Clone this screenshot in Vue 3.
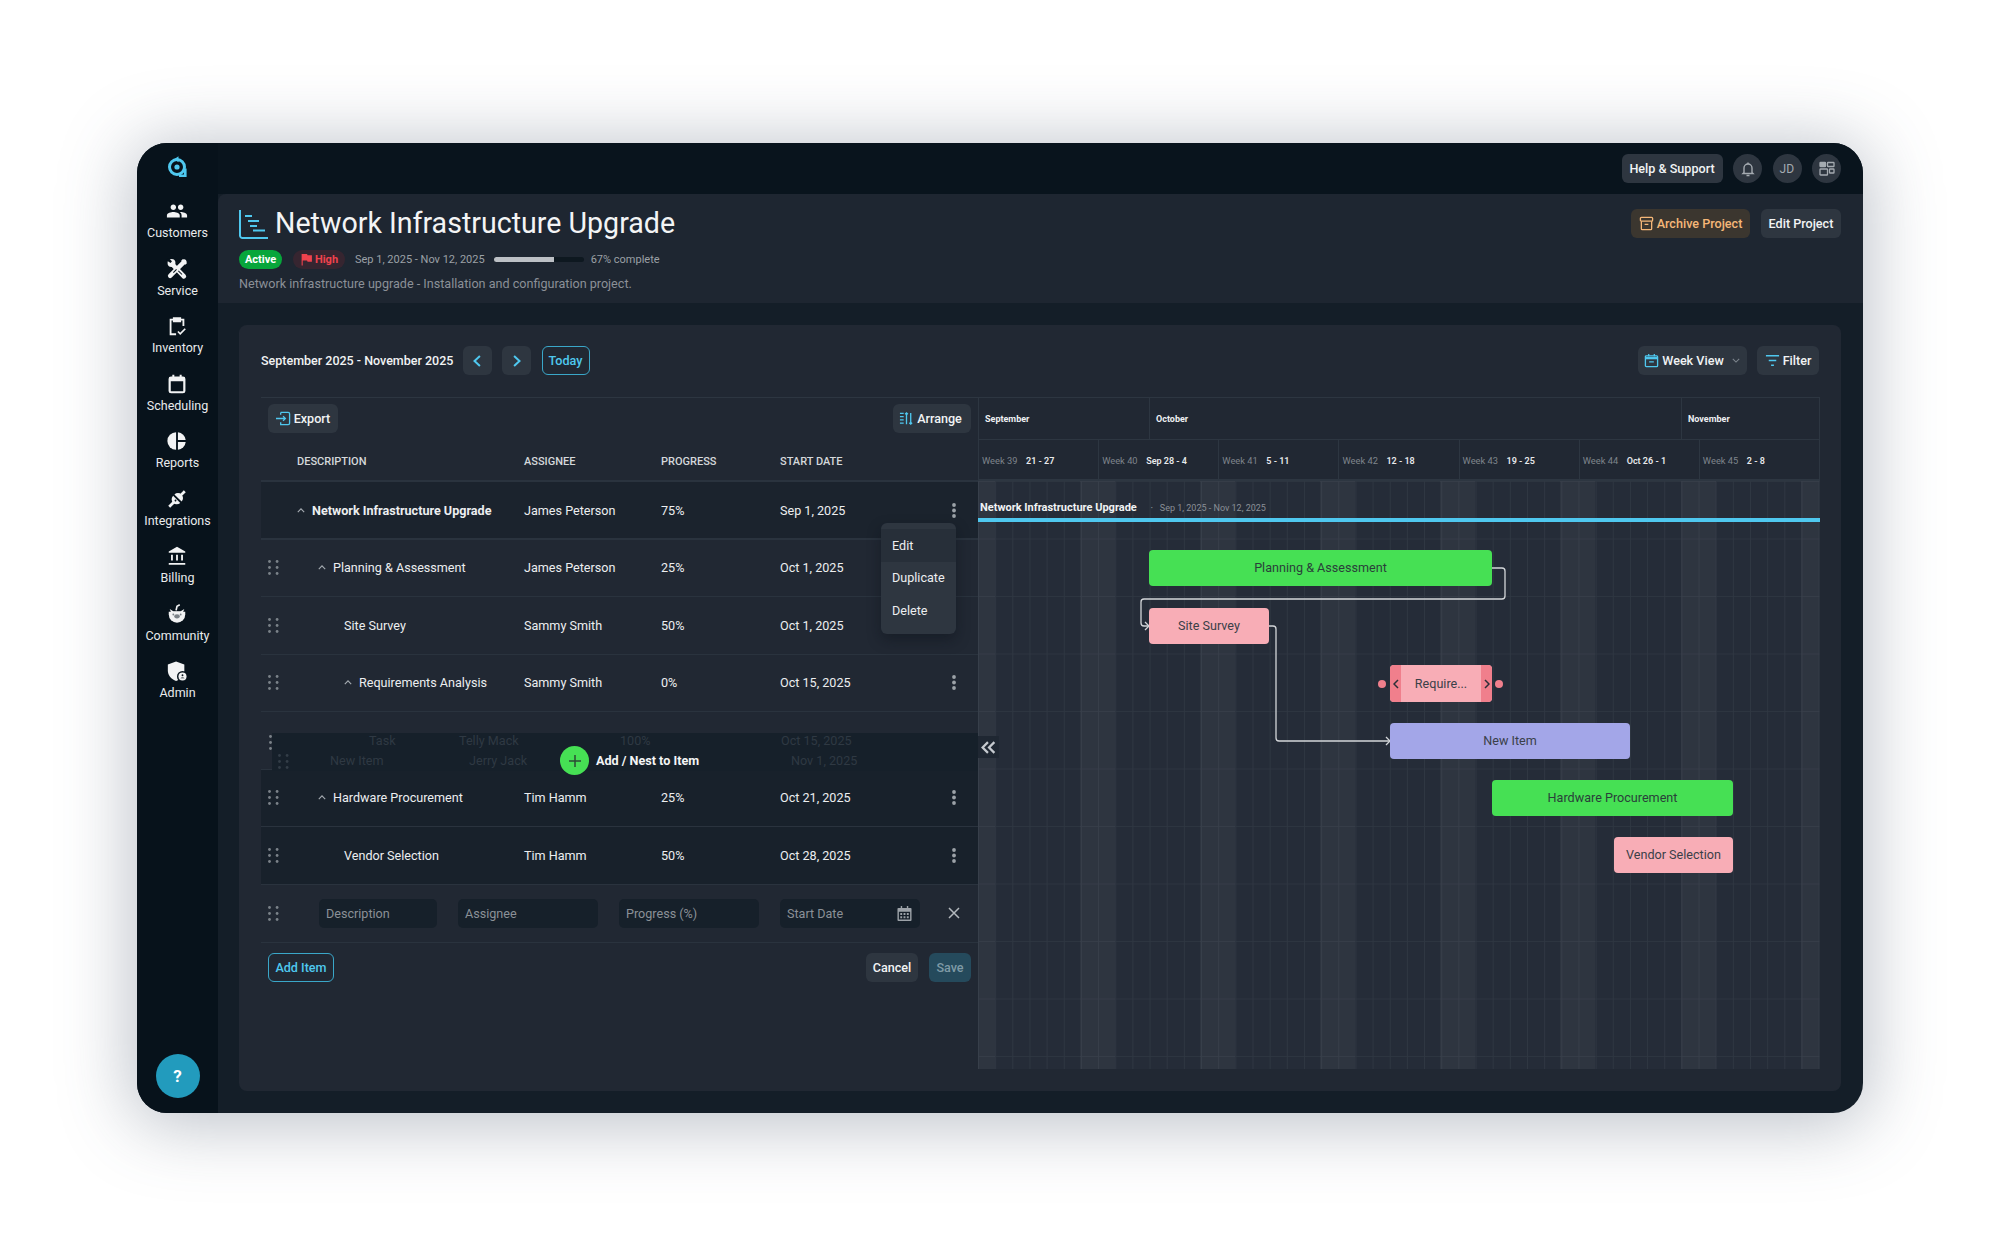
<script setup>
const navItems = [
  { key: 'customers', label: 'Customers' },
  { key: 'service', label: 'Service' },
  { key: 'inventory', label: 'Inventory' },
  { key: 'scheduling', label: 'Scheduling' },
  { key: 'reports', label: 'Reports' },
  { key: 'integrations', label: 'Integrations' },
  { key: 'billing', label: 'Billing' },
  { key: 'community', label: 'Community' },
  { key: 'admin', label: 'Admin' },
]
const rows = [
  { name: 'Network Infrastructure Upgrade', who: 'James Peterson', pct: '75%', date: 'Sep 1, 2025', indent: 0, chev: true, handle: false, kebab: true, cls: 'root' },
  { name: 'Planning & Assessment', who: 'James Peterson', pct: '25%', date: 'Oct 1, 2025', indent: 21, chev: true, handle: true, kebab: false, cls: '' },
  { name: 'Site Survey', who: 'Sammy Smith', pct: '50%', date: 'Oct 1, 2025', indent: 47, chev: false, handle: true, kebab: false, cls: '' },
  { name: 'Requirements Analysis', who: 'Sammy Smith', pct: '0%', date: 'Oct 15, 2025', indent: 47, chev: true, handle: true, kebab: true, cls: '' },
  { spacer: true },
  { name: 'Hardware Procurement', who: 'Tim Hamm', pct: '25%', date: 'Oct 21, 2025', indent: 21, chev: true, handle: true, kebab: true, cls: 'dim' },
  { name: 'Vendor Selection', who: 'Tim Hamm', pct: '50%', date: 'Oct 28, 2025', indent: 47, chev: false, handle: true, kebab: true, cls: 'dim' },
]
const months = [
  { label: 'September', w: 171 },
  { label: 'October', w: 532 },
  { label: 'November', w: 138 },
]
const weeks = [
  ['Week 39', '21 - 27'], ['Week 40', 'Sep 28 - 4'], ['Week 41', '5 - 11'], ['Week 42', '12 - 18'],
  ['Week 43', '19 - 25'], ['Week 44', 'Oct 26 - 1'], ['Week 45', '2 - 8'],
]
const shades = [
  { l: 0, w: 17 }, { l: 102, w: 35 }, { l: 222, w: 35 }, { l: 342, w: 35 },
  { l: 462, w: 35 }, { l: 582, w: 35 }, { l: 703, w: 35 }, { l: 823, w: 18 },
]
const bars = [
  { label: 'Planning & Assessment', cls: 'green', l: 171, t: 69, w: 343 },
  { label: 'Site Survey', cls: 'pink', l: 171, t: 127, w: 120 },
  { label: 'New Item', cls: 'violet', l: 412, t: 242, w: 240 },
  { label: 'Hardware Procurement', cls: 'green', l: 514, t: 299, w: 241 },
  { label: 'Vendor Selection', cls: 'pink', l: 636, t: 356, w: 119 },
]
function barStyle(b) {
  return { left: b.l + 'px', top: b.t + 'px', width: b.w + 'px' }
}
function shadeStyle(s) {
  return { left: s.l + 'px', width: s.w + 'px' }
}
</script>

<template>
  <div class="page">
    <div class="window">
      <aside class="sidebar">
        <svg class="logo" viewBox="0 0 20 22" width="20" height="22" fill="none">
          <circle cx="10" cy="12" r="7.5" stroke="#4fc8ef" stroke-width="3" />
          <circle cx="10" cy="12" r="2.6" fill="#4fc8ef" />
          <path d="M12 20.700h6.300V13.500" stroke="#4fc8ef" stroke-width="2.600" />
          <path d="M7 4.200 11.500 1.200v6z" fill="#4fc8ef" />
        </svg>
        <nav class="nav">
          <div v-for="item in navItems" :key="item.key" class="nav-item">
            <svg class="nav-icon" viewBox="0 0 24 24" width="24" height="24">
              <path v-if="item.key === 'customers'" fill="#f2f3f4" d="M16 11c1.66 0 2.99-1.34 2.99-3S17.66 5 16 5c-1.66 0-3 1.34-3 3s1.34 3 3 3zm-8 0c1.66 0 2.99-1.34 2.99-3S9.66 5 8 5C6.34 5 5 6.34 5 8s1.34 3 3 3zm0 2c-2.33 0-7 1.17-7 3.500V19h14v-2.500c0-2.330-4.670-3.500-7-3.500zm8 0c-.29 0-.62.02-.97.05 1.160.84 1.970 1.970 1.970 3.450V19h6v-2.500c0-2.330-4.670-3.500-7-3.500z" />
              <g v-else-if="item.key === 'service'">
                <path d="M6 6 19.500 20" stroke="#f2f3f4" stroke-width="5" stroke-linecap="round" />
                <path d="M20 4 4.500 19.500" stroke="#f2f3f4" stroke-width="4.800" stroke-linecap="round" />
                <circle cx="6" cy="5.500" r="4.300" fill="#f2f3f4" />
                <path d="M3.500 0.500 6.500 3.500 5 5.500 2 3.500 0.500 1.500z" fill="#07121b" />
                <path d="M17.500 2 22 6.500" stroke="#f2f3f4" stroke-width="2.800" />
                <path d="M13.500 14 17.500 18" stroke="#07121b" stroke-width="1.100" />
                <path d="M8 16 11.500 12.500" stroke="#07121b" stroke-width="1.100" />
              </g>
              <g v-else-if="item.key === 'inventory'" fill="none" stroke="#f2f3f4" stroke-width="2">
                <path d="M8 5H5v16h6" />
                <path d="M16 5h3v7" />
                <path d="M8.500 3.500h7v3.500h-7z" fill="#f2f3f4" />
                <path d="M13 18l2.500 2.500L21 15" stroke-width="1.800" />
              </g>
              <g v-else-if="item.key === 'scheduling'" fill="none" stroke="#f2f3f4">
                <rect x="4" y="5" width="16" height="16" rx="1.500" stroke-width="2.400" />
                <path d="M4 7h16" stroke-width="4" />
                <path d="M8 2v4M16 2v4" stroke-width="2.200" />
              </g>
              <g v-else-if="item.key === 'reports'" fill="#f2f3f4">
                <path d="M11 2.500a9.500 9.500 0 0 0 0 19z" />
                <path d="M13 2.500a9.500 9.500 0 0 1 8.500 8.500H13z" />
                <path d="M13 13h8.500a9.500 9.500 0 0 1-8.500 8.500z" />
              </g>
              <g v-else-if="item.key === 'integrations'" fill="#f2f3f4" transform="rotate(45 12 12)">
                <path d="M6.500 10.500a5.500 5.500 0 0 1 11 0z" />
                <rect x="10.500" y="0" width="3" height="6" />
                <path d="M6.500 12.500h11a5.500 5.500 0 0 1-11 0z" />
                <rect x="10.500" y="17" width="3" height="7" />
                <circle cx="12" cy="14.300" r="1" fill="#07121b" />
              </g>
              <path v-else-if="item.key === 'billing'" fill="#f2f3f4" d="M5.500 10.500v6.500h2v-6.500zm5.500 0v6.500h2v-6.500zM3 21.500h18v-2H3zm13.500-11v6.500h2v-6.500zM12 2 3 7v1.500h18V7z" />
              <g v-else-if="item.key === 'community'">
                <path fill="#f2f3f4" d="M3 9.500h18v3a9 9 0 0 1-18 0z" />
                <path fill="#f2f3f4" d="M4 6.500 8 9h8l4-2.500-1.500 3.500h-13z" />
                <path d="M11 8 12 3.500 15 2" fill="none" stroke="#f2f3f4" stroke-width="1.800" />
                <ellipse cx="12" cy="14.500" rx="3" ry="2.300" fill="#7b8288" />
                <circle cx="8" cy="12.500" r="1" fill="#7b8288" />
                <circle cx="16" cy="12.500" r="1" fill="#7b8288" />
              </g>
              <g v-else-if="item.key === 'admin'">
                <path fill="#f2f3f4" d="M11 1.500 20 5v6.500c0 5.500-3.800 9.500-9 11.500-5.200-2-9-6-9-11.500V5z" />
                <circle cx="18" cy="18" r="6" fill="#07121b" />
                <circle cx="18" cy="18" r="4.400" fill="#f2f3f4" />
                <circle cx="18" cy="16.600" r="1" fill="#07121b" />
                <path d="M15.800 20c.4-1.200 4-1.200 4.400 0z" fill="#07121b" />
              </g>
            </svg>
            <span class="nav-label">{{ item.label }}</span>
          </div>
        </nav>
        <div class="help-fab">?</div>
      </aside>

      <main class="main">
        <header class="topbar">
          <button class="btn help-btn">Help &amp; Support</button>
          <span class="circle">
            <svg viewBox="0 0 16 16" width="16" height="16" fill="none" stroke="#a5abb1" stroke-width="1.400">
              <path d="M4 11.500V7a4 4 0 0 1 8 0v4.500l1 1H3z" />
              <path d="M6.500 14.500h3" />
              <path d="M8 1.500v1.500" />
            </svg>
          </span>
          <span class="circle jd">JD</span>
          <span class="circle">
            <svg viewBox="0 0 16 16" width="16" height="16" fill="none" stroke="#a5abb1" stroke-width="1.300">
              <rect x="1" y="1.500" width="5.500" height="4" rx=".6" fill="#a5abb1" />
              <rect x="8.500" y="1.500" width="6.500" height="4" rx=".6" />
              <rect x="1" y="8" width="7.500" height="6" rx=".6" />
              <rect x="10.500" y="8" width="4.500" height="4" rx=".6" />
            </svg>
          </span>
        </header>

        <section class="project-head">
          <div class="project-info">
            <div class="title-line">
              <svg viewBox="0 0 29 29" width="29" height="29" fill="none" stroke="#4fc8ef" stroke-width="2">
                <path d="M1 0V25.500A2.500 2.500 0 0 0 3.500 28H29" />
                <path d="M6 6h7M9 11h11M11 16h7M14 20.500h12" />
              </svg>
              <h1 class="title">Network Infrastructure Upgrade</h1>
            </div>
            <div class="meta">
              <span class="badge active">Active</span>
              <span class="badge high">
                <svg viewBox="0 0 12 12" width="13" height="13" fill="#f0424d"><path d="M1.500 1h5l.5 1H11v6H7l-.5-1h-4v4.500h-1z" /></svg>
                High
              </span>
              <span class="dates">Sep 1, 2025 - Nov 12, 2025</span>
              <span class="track"><span class="fill"></span></span>
              <span class="dates">67% complete</span>
            </div>
            <p class="desc">Network infrastructure upgrade - Installation and configuration project.</p>
          </div>
          <div class="head-actions">
            <button class="btn archive">
              <svg viewBox="0 0 16 16" width="15" height="15" fill="none" stroke="#f5b778" stroke-width="1.400">
                <rect x="1.500" y="1.500" width="13" height="4" rx="1" />
                <path d="M2.500 5.500v8a1 1 0 0 0 1 1h9a1 1 0 0 0 1-1v-8M6 9h4" />
              </svg>
              Archive Project
            </button>
            <button class="btn">Edit Project</button>
          </div>
        </section>

        <div class="body">
          <section class="card">
            <div class="toolbar">
              <span class="range">September 2025 - November 2025</span>
              <button class="btn icon-btn">
                <svg viewBox="0 0 12 16" width="10" height="14" fill="none" stroke="#4fc8ef" stroke-width="2.400"><path d="M9.500 2 3 8l6.500 6" /></svg>
              </button>
              <button class="btn icon-btn">
                <svg viewBox="0 0 12 16" width="10" height="14" fill="none" stroke="#4fc8ef" stroke-width="2.400"><path d="M2.500 2 9 8l-6.500 6" /></svg>
              </button>
              <button class="btn outline today">Today</button>
              <span class="grow"></span>
              <button class="btn view">
                <svg viewBox="0 0 16 16" width="15" height="15" fill="none" stroke="#4fc8ef" stroke-width="1.400">
                  <rect x="1.500" y="3" width="13" height="11.500" rx="1" />
                  <path d="M1.500 5.500h13" stroke-width="2.400" />
                  <path d="M5 1v2.500M11 1v2.500M5.500 9.500h5" />
                </svg>
                Week View
                <svg class="caret" viewBox="0 0 10 6" width="8" height="5" fill="none" stroke="#7e868e" stroke-width="1.300"><path d="M1 1l4 4 4-4" /></svg>
              </button>
              <button class="btn filter">
                <svg viewBox="0 0 16 16" width="15" height="15" fill="none" stroke="#4fc8ef" stroke-width="1.500">
                  <path d="M1 3h14M4 8h8M6.500 13h3" />
                </svg>
                Filter
              </button>
            </div>

            <div class="split">
              <div class="table">
                <div class="table-tools">
                  <button class="btn export">
                    <svg viewBox="0 0 16 16" width="15" height="15" fill="none" stroke="#4fc8ef" stroke-width="1.400">
                      <path d="M5 1.500h8a1.500 1.500 0 0 1 1.500 1.500v10a1.500 1.500 0 0 1-1.500 1.500H5V12M5 4V1.500" />
                      <path d="M0 8h10M7.500 5.500 10 8l-2.500 2.500" />
                    </svg>
                    Export
                  </button>
                  <button class="btn arrange">
                    <svg viewBox="0 0 16 16" width="15" height="15" fill="none" stroke="#4fc8ef" stroke-width="1.400">
                      <path d="M1 2.500h4M1 6h4M1 9.500h4M1 13h4" />
                      <path d="M8 14V2M6.500 3.500 8 2l1.500 1.500" />
                      <path d="M12.500 2v12M11 12.500l1.500 1.500 1.500-1.500" />
                    </svg>
                    Arrange
                  </button>
                </div>
                <div class="thead">
                  <span></span>
                  <span>Description</span>
                  <span>Assignee</span>
                  <span>Progress</span>
                  <span>Start Date</span>
                </div>
                <template v-for="(row, i) in rows" :key="i">
                  <div v-if="row.spacer" class="row spacer"></div>
                  <div v-else class="row" :class="row.cls">
                    <span class="cell-handle">
                      <svg v-if="row.handle" viewBox="0 0 10.600 15" width="10.600" height="15" fill="#7b8289">
                        <circle cx="1.500" cy="1.500" r="1.400" /><circle cx="9.100" cy="1.500" r="1.400" />
                        <circle cx="1.500" cy="7.500" r="1.400" /><circle cx="9.100" cy="7.500" r="1.400" />
                        <circle cx="1.500" cy="13.500" r="1.400" /><circle cx="9.100" cy="13.500" r="1.400" />
                      </svg>
                    </span>
                    <span class="cell-name" :style="{ paddingLeft: row.indent + 'px' }">
                      <svg v-if="row.chev" class="chev" viewBox="0 0 10 6" width="8" height="5" fill="none" stroke="#a5abb1" stroke-width="1.400"><path d="M1 5l4-4 4 4" /></svg>
                      {{ row.name }}
                    </span>
                    <span>{{ row.who }}</span>
                    <span>{{ row.pct }}</span>
                    <span>{{ row.date }}</span>
                    <span class="cell-kebab">
                      <svg v-if="row.kebab" viewBox="0 0 4 15" width="4" height="15" fill="#9ca2a8">
                        <circle cx="2" cy="2" r="1.900" /><circle cx="2" cy="7.500" r="1.900" /><circle cx="2" cy="13" r="1.900" />
                      </svg>
                    </span>
                  </div>
                </template>

                <div class="form-row">
                  <svg viewBox="0 0 10.600 15" width="10.600" height="15" fill="#7b8289" class="form-handle">
                    <circle cx="1.500" cy="1.500" r="1.400" /><circle cx="9.100" cy="1.500" r="1.400" />
                    <circle cx="1.500" cy="7.500" r="1.400" /><circle cx="9.100" cy="7.500" r="1.400" />
                    <circle cx="1.500" cy="13.500" r="1.400" /><circle cx="9.100" cy="13.500" r="1.400" />
                  </svg>
                  <span class="field f-desc">Description</span>
                  <span class="field f-wide">Assignee</span>
                  <span class="field f-wide">Progress (%)</span>
                  <span class="field f-wide date-field">
                    Start Date
                    <svg viewBox="0 0 16 16" width="15" height="15" fill="#9ca2a8">
                      <path d="M4 0h1.500v2h5V0H12v2h2.500a1 1 0 0 1 1 1v12a1 1 0 0 1-1 1h-13a1 1 0 0 1-1-1V3a1 1 0 0 1 1-1H4zM2 6v8.500h12V6z" />
                      <path d="M3.500 7.500h2v2h-2zM7 7.500h2v2H7zM10.500 7.500h2v2h-2zM3.500 11h2v2h-2zM7 11h2v2H7zM10.500 11h2v2h-2z" />
                    </svg>
                  </span>
                  <svg class="close" viewBox="0 0 12 12" width="12" height="12" fill="none" stroke="#b4b9be" stroke-width="1.500"><path d="M1 1l10 10M11 1 1 11" /></svg>
                </div>

                <div class="table-foot">
                  <button class="btn outline add-item">Add Item</button>
                  <span class="grow"></span>
                  <button class="btn cancel">Cancel</button>
                  <button class="btn save">Save</button>
                </div>

                <div class="menu">
                  <div class="menu-item hover">Edit</div>
                  <div class="menu-item">Duplicate</div>
                  <div class="menu-item">Delete</div>
                </div>

                <div class="drag-ghost">
                  <svg class="ghost-h1" viewBox="0 0 3 15" width="3" height="15" fill="#7b8289">
                    <circle cx="1.500" cy="1.500" r="1.400" /><circle cx="1.500" cy="7.500" r="1.400" /><circle cx="1.500" cy="13.500" r="1.400" />
                  </svg>
                  <div class="ghost-line top">
                    <span class="g1">Task</span><span class="g2">Telly Mack</span><span class="g3">100%</span><span class="g4">Oct 15, 2025</span>
                  </div>
                  <div class="ghost-line low">
                    <svg class="ghost-h2" viewBox="0 0 10.600 15" width="10.600" height="15" fill="#333d47">
                      <circle cx="1.500" cy="1.500" r="1.400" /><circle cx="9.100" cy="1.500" r="1.400" />
                      <circle cx="1.500" cy="7.500" r="1.400" /><circle cx="9.100" cy="7.500" r="1.400" />
                      <circle cx="1.500" cy="13.500" r="1.400" /><circle cx="9.100" cy="13.500" r="1.400" />
                    </svg>
                    <span class="g5">New Item</span><span class="g6">Jerry Jack</span><span class="g7">Nov 1, 2025</span>
                  </div>
                  <div class="nest">
                    <span class="nest-plus">
                      <svg viewBox="0 0 14 14" width="14" height="14" fill="none" stroke="#2c4a35" stroke-width="1.500"><path d="M7 1v12M1 7h12" /></svg>
                    </span>
                    Add / Nest to Item
                  </div>
                </div>
              </div>

              <div class="chart">
                <div class="months">
                  <div v-for="m in months" :key="m.label" class="month" :style="{ width: m.w + 'px' }">{{ m.label }}</div>
                </div>
                <div class="weeks">
                  <div v-for="w in weeks" :key="w[0]" class="week">
                    <span class="week-no">{{ w[0] }}</span>
                    <span class="week-range">{{ w[1] }}</span>
                  </div>
                </div>
                <div class="grid">
                  <div v-for="s in shades" :key="s.l" class="shade" :style="shadeStyle(s)"></div>
                  <div class="root-label">
                    <b>Network Infrastructure Upgrade</b>
                    <i>•</i>
                    <span>Sep 1, 2025 - Nov 12, 2025</span>
                  </div>
                  <div class="root-bar"></div>
                  <svg class="links" viewBox="0 0 841 588" width="841" height="588" fill="none" stroke="#d3d6d9" stroke-width="1.300">
                    <path d="M514 87H524Q527 87 527 90V115Q527 118 524 118H166Q163 118 163 121V142Q163 145 166 145H171" />
                    <path d="M167 141 171 145 167 149" />
                    <path d="M291 145H295Q298 145 298 148V257Q298 260 301 260H412" />
                    <path d="M408 256 412 260 408 264" />
                  </svg>
                  <div v-for="b in bars" :key="b.label" class="bar" :class="b.cls" :style="barStyle(b)">{{ b.label }}</div>
                  <div class="bar pink selected">
                    <span class="grip">
                      <svg viewBox="0 0 6 10" width="6" height="10" fill="none" stroke="#2b2f38" stroke-width="1.500"><path d="M5 1 1 5l4 4" /></svg>
                    </span>
                    <span class="bar-mid">Require...</span>
                    <span class="grip">
                      <svg viewBox="0 0 6 10" width="6" height="10" fill="none" stroke="#2b2f38" stroke-width="1.500"><path d="M1 1l4 4-4 4" /></svg>
                    </span>
                    <span class="dot left"></span>
                    <span class="dot right"></span>
                  </div>
                  <div class="collapse">
                    <svg viewBox="0 0 14 12" width="15" height="13" fill="none" stroke="#c6cacf" stroke-width="2.100"><path d="M6.500 1 1.500 6l5 5M12.500 1l-5 5 5 5" /></svg>
                  </div>
                </div>
              </div>
            </div>
          </section>
        </div>
      </main>
    </div>
  </div>
</template>

<style>
html, body { margin: 0; background: #ffffff; }
</style>

<style scoped>
* { box-sizing: border-box; }
.page {
  width: 2000px;
  height: 1257px;
  padding: 143px 137px;
  font-family: Roboto, "Liberation Sans", sans-serif;
  font-size: 12.600px;
  color: #eef0f2;
  background: #ffffff;
}
.window {
  display: flex;
  width: 1726px;
  height: 970px;
  border-radius: 30px;
  overflow: hidden;
  background: #141e28;
  box-shadow: 0 6px 70px 6px rgba(70, 82, 105, 0.36);
}
.sidebar {
  position: relative;
  flex: 0 0 81px;
  background: #07121b;
  display: flex;
  flex-direction: column;
  align-items: center;
}
.logo { margin: 12px 1px 0 0; }
.nav { margin-top: 23px; display: flex; flex-direction: column; }
.nav-item {
  height: 57.500px;
  display: flex;
  flex-direction: column;
  align-items: center;
  justify-content: flex-start;
}
.nav-icon { display: block; width: 22px; height: 22px; }
.nav-label { margin-top: 3px; font-size: 12.500px; line-height: 16px; color: #e9ebed; }
.help-fab {
  position: absolute;
  left: 18.500px;
  bottom: 15px;
  width: 44px;
  height: 44px;
  border-radius: 50%;
  background: #229bbd;
  color: #fff;
  font-weight: 700;
  font-size: 17px;
  display: flex;
  align-items: center;
  justify-content: center;
}
.main { flex: 1; min-width: 0; display: flex; flex-direction: column; }
.topbar {
  flex: 0 0 51px;
  background: #09141d;
  display: flex;
  align-items: flex-start;
  justify-content: flex-end;
  gap: 10.500px;
  padding: 11px 22px 0 0;
}
.btn {
  height: 29px;
  border: 0;
  border-radius: 6px;
  background: #2e3640;
  color: #f1f3f4;
  font-family: inherit;
  font-size: 12.600px;
  font-weight: 500;
  padding: 0 8px;
  display: inline-flex;
  align-items: center;
  justify-content: center;
  gap: 3px;
  white-space: nowrap;
}
.btn svg { flex: none; }
.help-btn { width: 101px; }
.circle {
  width: 29px;
  height: 29px;
  border-radius: 50%;
  background: #2e3640;
  display: flex;
  align-items: center;
  justify-content: center;
}
.jd { color: #a5abb1; font-size: 12px; letter-spacing: .3px; }
.project-head {
  flex: 0 0 109px;
  background: #1e2631;
  border-radius: 8px 0 0 0;
  display: flex;
  justify-content: space-between;
  padding: 15px 22px 0 21px;
}
.title-line { display: flex; align-items: center; gap: 7px; height: 31px; }
.title { margin: 0 0 3px; font-size: 28.600px; line-height: 28px; font-weight: 400; color: #f3f4f5; }
.meta { margin-top: 10px; display: flex; align-items: center; height: 19px; }
.badge {
  height: 19px;
  border-radius: 10px;
  font-size: 11px;
  font-weight: 700;
  display: inline-flex;
  align-items: center;
  justify-content: center;
}
.active { width: 43px; background: #07a63b; color: #fff; }
.high { width: 52px; margin-left: 11px; background: #362530; color: #f0424d; gap: 2px; }
.dates { font-size: 11px; color: #9ba0a6; }
.high + .dates { margin-left: 10px; }
.track {
  width: 90px;
  height: 5px;
  margin: 0 7px 0 9px;
  border-radius: 3px;
  background: #0e1820;
  overflow: hidden;
}
.fill { display: block; width: 67%; height: 100%; background: #bcc0c5; }
.desc { margin: 7px 0 0; font-size: 12.600px; line-height: 16px; color: #8b9097; }
.head-actions { display: flex; gap: 11px; }
.archive { width: 119px; background: #3b362f; color: #f5b778; }
.head-actions .btn:last-child { width: 80px; }
.body { flex: 1; padding: 22px 22px 22px 21px; min-height: 0; }
.card {
  height: 766px;
  background: #212833;
  border-radius: 8px;
  padding: 21px 22px 0;
}
.toolbar { display: flex; align-items: center; gap: 10.500px; height: 29px; margin-bottom: 22px; }
.range { font-size: 12.500px; font-weight: 500; color: #f1f3f4; width: 191px; white-space: nowrap; }
.icon-btn { width: 29px; padding: 0; }
.outline { background: transparent; border: 1.500px solid #3aa7c9; color: #4fc8ef; }
.today { width: 48px; padding: 0; }
.grow { flex: 1; }
.view { width: 109px; gap: 3px; padding: 0 6px; }
.view .caret { margin-left: 5px; }
.filter { width: 62px; padding: 0; }
.split { display: flex; }
.table {
  position: relative;
  flex: 0 0 717px;
  border-top: 1px solid #2d3641;
}
.table-tools { display: flex; justify-content: space-between; padding: 6px 7px 0; }
.export { width: 70px; padding: 0; }
.arrange { width: 78px; padding: 0 3px 0 0; }
.thead, .row {
  display: grid;
  grid-template-columns: 36px 227px 137px 119px 161px 25px;
  align-items: center;
}
.thead {
  height: 49px;
  padding-top: 9px;
  border-bottom: 2px solid #2a333e;
  font-size: 11px;
  font-weight: 500;
  text-transform: uppercase;
  color: #d5d8db;
}
.row {
  height: 57.500px;
  border-bottom: 1px solid #2a333e;
  color: #eceef0;
}
.row.root { background: #1b232d; border-bottom-width: 2px; padding-top: 2px; }
.row.dim { background: #18212b; }
.cell-handle { padding-left: 7px; display: flex; }
.cell-name { display: flex; align-items: center; gap: 7px; }
.chev { flex: none; }
.root .cell-name { font-weight: 700; }
.cell-kebab { display: flex; justify-content: center; }
.form-row {
  height: 58px;
  border-bottom: 1px solid #2a333e;
  display: flex;
  align-items: center;
  padding-left: 7px;
}
.form-handle { margin-right: 40.400px; }
.field {
  height: 29px;
  background: #16202a;
  border-radius: 5px;
  color: #8b9097;
  padding: 0 7px;
  display: flex;
  align-items: center;
  margin-right: 21px;
}
.f-desc { width: 118px; }
.f-wide { width: 140px; }
.date-field { justify-content: space-between; margin-right: 28px; padding-right: 8px; }
.table-foot { display: flex; align-items: center; gap: 11px; padding: 10px 7px 0; }
.add-item { width: 66px; padding: 0; }
.cancel { width: 52px; padding: 0; }
.save { width: 42px; padding: 0; background: #254a5c; color: #7f9aa6; }
.menu {
  position: absolute;
  left: 620px;
  top: 125px;
  width: 75px;
  height: 111px;
  padding: 6px 0 0;
  border-radius: 6px;
  background: #2e3640;
  box-shadow: 0 6px 14px rgba(10, 16, 22, .4);
}
.menu-item { height: 32.500px; padding-left: 11px; display: flex; align-items: center; color: #eceef0; }
.menu-item.hover { background: #272f39; }
.drag-ghost {
  position: absolute;
  left: 11px;
  top: 335px;
  width: 706px;
  height: 38px;
  background: #16202a;
  color: #2f3943;
}
.ghost-h1 { position: absolute; left: -3px; top: 2px; }
.ghost-line { position: absolute; left: 0; right: 0; height: 16px; line-height: 16px; }
.ghost-line span { position: absolute; top: 0; white-space: nowrap; }
.top { top: 0; }
.low { top: 20px; }
.ghost-h2 { position: absolute; left: 6px; top: 1px; }
.g1 { left: 97px; }
.g2 { left: 187px; }
.g3 { left: 348px; }
.g4 { left: 509px; }
.g5 { left: 58px; }
.g6 { left: 197px; }
.g7 { left: 519px; }
.nest {
  position: absolute;
  left: 288px;
  top: 13px;
  display: flex;
  align-items: center;
  gap: 7px;
  font-weight: 700;
  color: #f4f5f6;
  white-space: nowrap;
}
.nest-plus {
  width: 29px;
  height: 29px;
  border-radius: 50%;
  background: #46e054;
  display: flex;
  align-items: center;
  justify-content: center;
}
.chart { flex: 0 0 841px; }
.months, .weeks { display: flex; height: 42px; border-top: 1px solid #2d3641; border-right: 1px solid #2d3641; }
.month {
  border-left: 1px solid #2d3641;
  padding-left: 6px;
  display: flex;
  align-items: center;
  font-size: 9px;
  font-weight: 700;
  color: #eef0f2;
}
.week {
  flex: 1;
  border-left: 1px solid #2d3641;
  padding-left: 3px;
  display: flex;
  align-items: center;
  font-size: 9.300px;
  padding-top: 2px;
}
.week-no { width: 44px; color: #7f858c; }
.week-range { font-size: 9px; font-weight: 600; color: #e8eaec; }
.weeks { border-bottom: 2px solid #2d3641; }
.grid {
  position: relative;
  height: 588px;
  background-color: #252c38;
  background-image:
    linear-gradient(to right, #2f3742 1px, transparent 1px),
    linear-gradient(to bottom, #2d3540 1px, transparent 1px);
  background-size: 17.170px 100%, 100% 57.500px;
  background-position: 0 0, 0 0;
}
.shade { position: absolute; top: 0; bottom: 0; background: rgba(255, 255, 255, .042); }
.root-label {
  position: absolute;
  left: 2px;
  top: 20px;
  display: flex;
  align-items: center;
  white-space: nowrap;
  font-size: 11px;
}
.root-label b { font-weight: 700; color: #f1f3f4; }
.root-label i { font-style: normal; font-size: 6px; margin: 0 7px 0 14px; color: #8a8f96; }
.root-label span { font-size: 9px; color: #8a8f96; }
.root-bar { position: absolute; left: 0; right: 0; top: 37px; height: 4px; background: #4fc8ef; }
.links { position: absolute; left: 0; top: 0; }
.bar {
  position: absolute;
  height: 36px;
  border-radius: 4px;
  display: flex;
  align-items: center;
  justify-content: center;
  color: #3a4048;
  white-space: nowrap;
  padding-bottom: 1px;
}
.green { background: #46e054; color: #2a3f3a; }
.pink { background: #f8adb6; }
.violet { background: #a3a6e8; }
.selected {
  left: 412px;
  top: 184px;
  width: 102px;
  height: 37px;
  padding-bottom: 0;
  justify-content: space-between;
}
.grip {
  width: 11px;
  height: 100%;
  background: #f07f8c;
  display: flex;
  align-items: center;
  justify-content: center;
}
.grip:first-child { border-radius: 4px 0 0 4px; }
.grip:nth-child(3) { border-radius: 0 4px 4px 0; }
.dot { position: absolute; top: 14.500px; width: 8px; height: 8px; border-radius: 50%; background: #f07f8c; }
.dot.left { left: -12px; }
.dot.right { right: -11px; }
.collapse {
  position: absolute;
  left: 0;
  top: 255px;
  width: 21px;
  height: 22px;
  background: #1f2732;
  display: flex;
  align-items: center;
  justify-content: center;
}
</style>
